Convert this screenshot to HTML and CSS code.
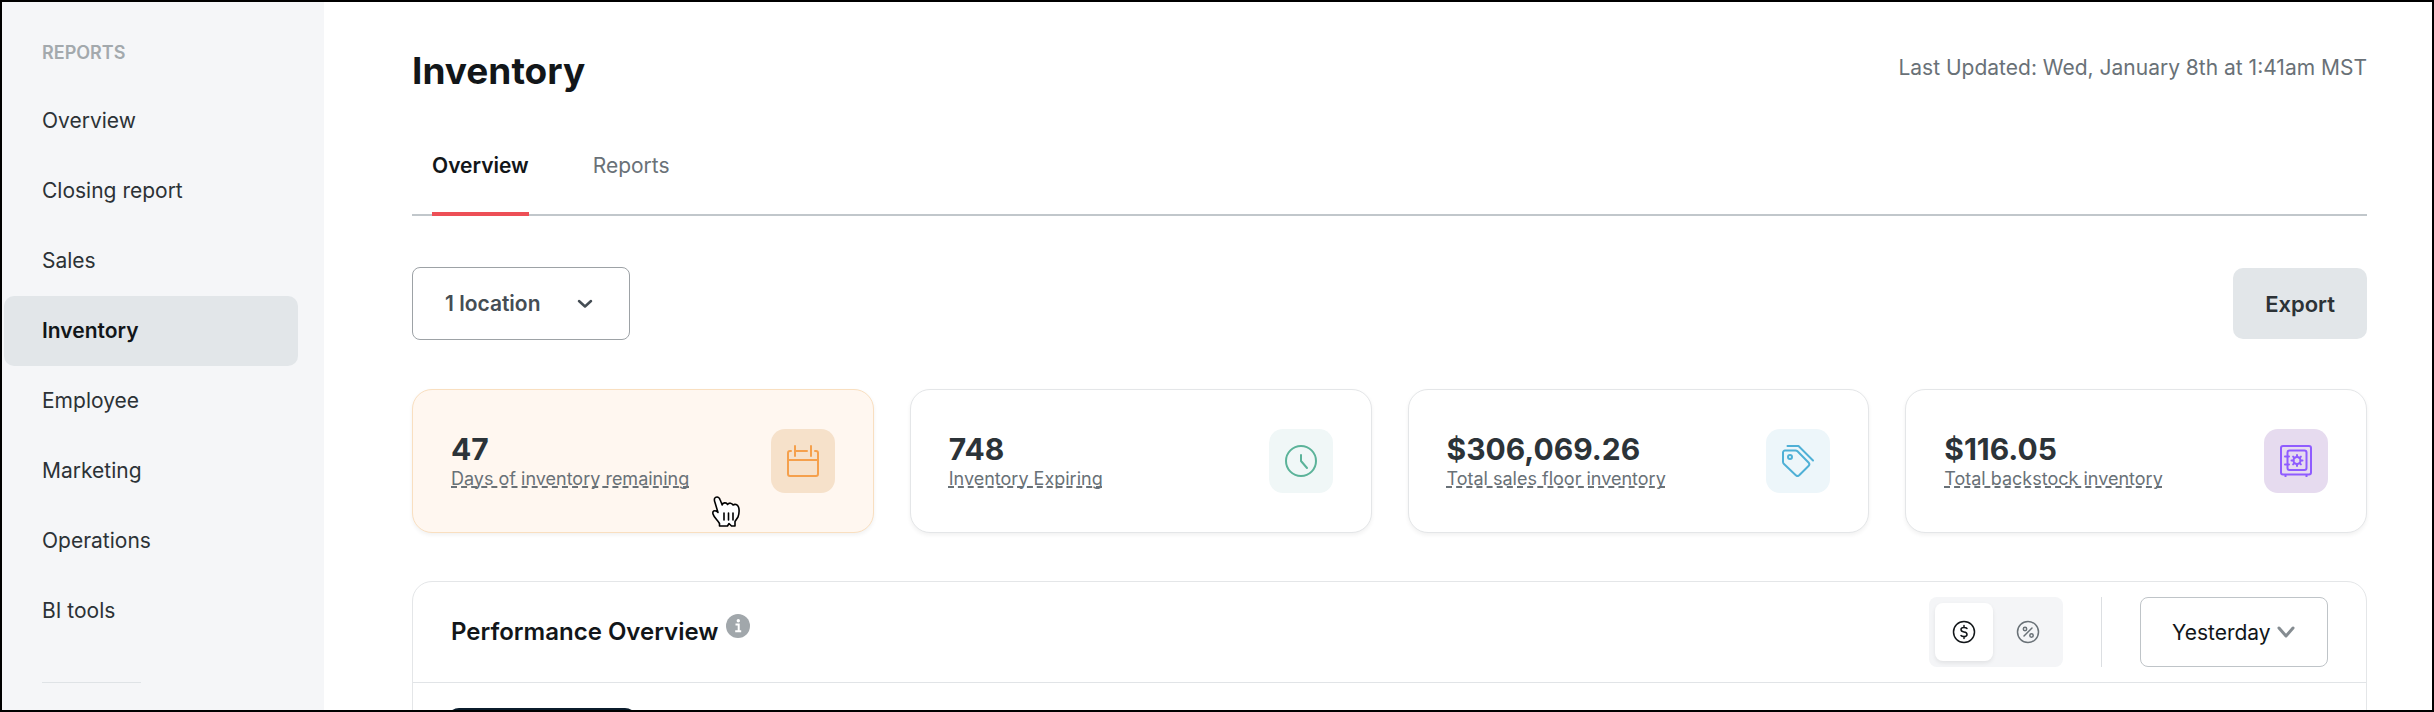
FILE: index.html
```html
<!DOCTYPE html>
<html lang="en">
<head>
  <meta charset="UTF-8">
  <meta name="viewport" content="width=device-width, initial-scale=1.0">
  <title>Inventory</title>
  <link rel="stylesheet" href="styles.css">
</head>
<body>

  <div class="app">
    <!-- Sidebar -->
    <aside class="sidebar">
      <h2 class="sidebar-title">REPORTS</h2>
      <nav class="sidebar-nav">
        <a href="#">Overview</a>
        <a href="#">Closing report</a>
        <a href="#">Sales</a>
        <a href="#" class="active">Inventory</a>
        <a href="#">Employee</a>
        <a href="#">Marketing</a>
        <a href="#">Operations</a>
        <a href="#">BI tools</a>
      </nav>
      <hr class="sidebar-line">
    </aside>

    <main class="main">
      <header class="page-header">
        <h1>Inventory</h1>
        <p class="updated">Last Updated: Wed, January 8th at 1:41am MST</p>
      </header>

      <div class="tabs">
        <button type="button" class="tab active">Overview</button>
        <button type="button" class="tab">Reports</button>
      </div>

      <div class="toolbar">
        <div class="dropdown location">
          <select aria-label="Location">
            <option>1 location</option>
          </select>
          <svg width="16" height="10" viewBox="0 0 16 10" fill="none" stroke="#454d54" stroke-width="2.5" stroke-linecap="round" stroke-linejoin="round"><path d="M2 2l6 5.5L14 2"/></svg>
        </div>
        <button type="button" class="export">Export</button>
      </div>

      <!-- Summary cards -->
      <section class="cards">
        <div class="card highlighted">
          <div>
            <div class="card-value">47</div>
            <div class="card-label">Days of inventory remaining</div>
          </div>
          <div class="card-icon orange">
            <svg width="32" height="32" viewBox="0 0 32 32" fill="none" stroke="#f5a04c" stroke-width="2" stroke-linecap="round" stroke-linejoin="round"><path d="M4 6H3a2 2 0 0 0-2 2v21a2 2 0 0 0 2 2h26a2 2 0 0 0 2-2V8a2 2 0 0 0-2-2h-1M8 6h12M1 15h30M8 1v10M24 1v10"/></svg>
          </div>
          <svg class="cursor" width="28" height="31" viewBox="0 0 28 31" fill="#fff" stroke="#000" stroke-width="1.6" stroke-linecap="round" stroke-linejoin="round"><path d="M3 6.500C1.500 2.500 3 1 5 1c1.500 0 2.500 1 3.200 3l2 5C10.500 6.500 14.500 6 15.500 8.500 17 6.500 20 6.800 21 9c2-1.200 4.500-.5 5.500 2 1 3 .5 7-.5 10l-3 4.500V30h-3.500L17 27.500 15.500 30H7.500v-2.500C5.500 24 2 21.500 1 18c-.8-3 1.500-4 4-2.500l1 1z"/><path d="M12 17v7M16.500 17v7M21 17v7"/></svg>
        </div>

        <div class="card">
          <div>
            <div class="card-value">748</div>
            <div class="card-label">Inventory Expiring</div>
          </div>
          <div class="card-icon green">
            <svg width="32" height="32" viewBox="0 0 32 32" fill="none" stroke="#5bb399" stroke-width="2" stroke-linecap="round" stroke-linejoin="round"><circle cx="16" cy="16" r="15"/><path d="M16 10v6l6 7"/></svg>
          </div>
        </div>

        <div class="card">
          <div>
            <div class="card-value">$306,069.26</div>
            <div class="card-label">Total sales floor inventory</div>
          </div>
          <div class="card-icon blue">
            <svg width="32" height="32" viewBox="0 0 32 32" fill="none" stroke="#4fb0d6" stroke-width="2" stroke-linecap="round" stroke-linejoin="round"><path d="M1 7.500a2 2 0 0 1 2-2h10.500a3 3 0 0 1 2 .8l11 11.200a2.500 2.500 0 0 1 0 3.500l-9.300 9.300a2.500 2.500 0 0 1-3.400 0L2 19a3 3 0 0 1-1-2z"/><circle cx="8" cy="12" r="2"/><path d="M5.500 1h11L31 15.500"/></svg>
          </div>
        </div>

        <div class="card">
          <div>
            <div class="card-value">$116.05</div>
            <div class="card-label">Total backstock inventory</div>
          </div>
          <div class="card-icon purple">
            <svg width="32" height="32" viewBox="0 0 32 32" fill="none" stroke="#8f5cff" stroke-width="2" stroke-linecap="round" stroke-linejoin="round"><rect x="1" y="1" width="30" height="28.500" rx="2"/><rect x="7.500" y="5.500" width="19" height="19.500" rx="2"/><path d="M5 11.500h4M5 19.500h4M5.500 30v1.500M26.500 30v1.500"/><circle cx="17" cy="15.500" r="3.500"/><path d="M17 10v2M17 19v2M11.500 15.500h2M20.500 15.500h2M13.100 11.600l1.400 1.400M19.500 18l1.400 1.400M13.100 19.400l1.400-1.400M19.500 13l1.400-1.400"/></svg>
          </div>
        </div>
      </section>

      <!-- Performance overview -->
      <section class="panel">
        <div class="panel-header">
          <div class="panel-title">
            <h2>Performance Overview</h2>
            <svg width="24" height="24" viewBox="0 0 24 24"><circle cx="12" cy="12" r="12" fill="#a1a7ab"/><circle cx="12.300" cy="6.700" r="1.700" fill="#fff"/><path d="M9.500 10.500h3.200v6.700M9.200 17.200h6" fill="none" stroke="#fff" stroke-width="2"/></svg>
          </div>
          <div class="panel-controls">
            <div class="toggle">
              <label class="toggle-item">
                <input type="radio" name="unit" aria-label="Dollars" checked>
                <svg width="24" height="24" viewBox="0 0 24 24" fill="none" stroke="currentColor" stroke-width="1.5" stroke-linecap="round" stroke-linejoin="round"><circle cx="12" cy="12" r="10.500"/><path d="M12 5.500v2M12 16.500v2M15 8.500c-.5-.7-1.500-1-3-1-4 0-4 4 0 4.500s4 4.500 0 4.500c-1.500 0-2.500-.3-3-1"/></svg>
              </label>
              <label class="toggle-item">
                <input type="radio" name="unit" aria-label="Percent">
                <svg width="24" height="24" viewBox="0 0 24 24" fill="none" stroke="currentColor" stroke-width="1.5" stroke-linecap="round" stroke-linejoin="round"><circle cx="12" cy="12" r="10.500"/><path d="M16 8l-8 8"/><circle cx="9" cy="9" r="1.700"/><circle cx="15.500" cy="15.500" r="1.700"/></svg>
              </label>
            </div>
            <div class="controls-line"></div>
            <div class="dropdown period">
              <select aria-label="Period">
                <option>Yesterday</option>
              </select>
              <svg width="18" height="12" viewBox="0 0 18 12" fill="none" stroke="#858c91" stroke-width="3" stroke-linecap="round" stroke-linejoin="round"><path d="M2 2l7 8 7-8"/></svg>
            </div>
          </div>
        </div>
        <div class="panel-body">
          <div class="panel-block"></div>
        </div>
      </section>
    </main>
  </div>

</body>
</html>
```
FILE: styles.css
```css
* {
  box-sizing: border-box;
}
body {
  margin: 0;
  font-family: Inter, "Liberation Sans", sans-serif;
  font-size: 21px;
  color: #121619;
  background-color: #fff;
}
h1, h2, p {
  margin: 0;
}
button, select {
  font-family: inherit;
  font-size: inherit;
  cursor: pointer;
}
svg {
  display: block;
  flex-shrink: 0;
}
.app {
  display: flex;
  height: 100vh;
  border: 2px solid #000;
  overflow: hidden;
}

/* Sidebar */
.sidebar {
  width: 322px;
  flex-shrink: 0;
  padding: 39px 26px 0 2px;
  background-color: #f5f6f8;
}
.sidebar-title {
  padding-left: 38px;
  font-size: 18px;
  line-height: 24px;
  font-weight: 600;
  color: #a3a9ad;
}
.sidebar-nav {
  display: flex;
  flex-direction: column;
  margin-top: 21px;
}
.sidebar-nav a {
  padding: 0 38px;
  line-height: 70px;
  border-radius: 10px;
  color: #2c3236;
  text-decoration: none;
}
.sidebar-nav .active {
  background-color: #e2e6e9;
  font-weight: 600;
  color: #121619;
}
.sidebar-line {
  width: 99px;
  margin: 36px 38px 0;
  border: 0;
  border-top: 1px solid #dfe3e6;
}

/* Main */
.main {
  flex: 1;
  min-width: 0;
  padding: 45px 65px 0 88px;
}
.page-header {
  display: flex;
  justify-content: space-between;
  align-items: flex-start;
}
h1 {
  font-size: 37px;
  line-height: 48px;
  font-weight: 700;
}
.updated {
  line-height: 42px;
  color: #697177;
}
.tabs {
  display: flex;
  gap: 64px;
  margin-top: 41px;
  padding: 0 20px;
  border-bottom: 2px solid #c1c7cb;
}
.tab {
  margin-bottom: -2px;
  padding: 0 0 16px;
  border: 0;
  border-bottom: 4px solid transparent;
  background: none;
  line-height: 60px;
  color: #697177;
}
.tab.active {
  border-color: #ed4f56;
  font-weight: 600;
  color: #121619;
}
.toolbar {
  display: flex;
  justify-content: space-between;
  align-items: center;
  margin-top: 51px;
}
.dropdown {
  display: grid;
  align-items: center;
}
.dropdown select, .dropdown svg {
  grid-area: 1 / 1;
}
.dropdown svg {
  justify-self: end;
  pointer-events: none;
}
.dropdown select {
  width: 100%;
  appearance: none;
  border-radius: 8px;
  background-color: #fff;
}
.location {
  width: 218px;
}
.location select {
  height: 73px;
  padding: 0 32px;
  border: 1px solid #9da2a6;
  font-weight: 600;
  color: #454d54;
}
.location svg {
  margin-right: 37px;
}
.export {
  height: 71px;
  padding: 0 32px;
  border: 0;
  border-radius: 10px;
  background-color: #e2e6e9;
  font-size: 22px;
  font-weight: 600;
  color: #2c3236;
}

/* Cards */
.cards {
  display: grid;
  grid-template-columns: repeat(4, 1fr);
  gap: 36px;
  margin-top: 49px;
}
.card {
  position: relative;
  display: flex;
  justify-content: space-between;
  align-items: center;
  padding: 39px 38px;
  border: 1px solid #e4e6e8;
  border-radius: 20px;
  background-color: #fff;
  box-shadow: 0 2px 4px rgba(0, 0, 0, 0.06);
}
.card.highlighted {
  border-color: #f9dfc0;
  background-color: #fff7f0;
}
.card-value {
  font-size: 30px;
  line-height: 36px;
  font-weight: 700;
  color: #2c3338;
}
.card-label {
  font-size: 18px;
  line-height: 24px;
  color: #697177;
  text-decoration: underline dashed 2px;
  text-decoration-skip-ink: none;
}
.card-icon {
  display: grid;
  place-items: center;
  width: 64px;
  height: 64px;
  border-radius: 14px;
}
.orange {
  background-color: #f6e1ca;
}
.green {
  background-color: #f0f7f7;
}
.blue {
  background-color: #edf6fa;
}
.purple {
  background-color: #e6dbef;
}
.cursor {
  position: absolute;
  left: 299px;
  top: 106px;
}

/* Performance overview */
.panel {
  margin-top: 48px;
  border: 1px solid #e4e6e8;
  border-radius: 20px;
}
.panel-header {
  display: flex;
  justify-content: space-between;
  align-items: center;
  padding: 15px 38px;
  border-bottom: 1px solid #e1e4e7;
}
.panel-title {
  display: flex;
  align-items: flex-start;
  gap: 8px;
}
.panel-title h2 {
  font-size: 24px;
  line-height: 36px;
  font-weight: 600;
}
.panel-controls {
  display: flex;
  align-items: center;
  gap: 38px;
}
.toggle {
  display: flex;
  gap: 6px;
  padding: 6px;
  border-radius: 8px;
  background-color: #f4f5f7;
}
.toggle-item {
  display: grid;
  place-items: center;
  width: 58px;
  height: 58px;
  border-radius: 8px;
  color: #697177;
  cursor: pointer;
}
.toggle-item input {
  appearance: none;
  margin: 0;
}
.toggle-item input, .toggle-item svg {
  grid-area: 1 / 1;
}
.toggle-item:has(:checked) {
  background-color: #fff;
  color: #121619;
  box-shadow: 0 2px 4px rgba(0, 0, 0, 0.08);
}
.controls-line {
  width: 1px;
  height: 70px;
  background-color: #dcdfe2;
}
.period {
  width: 188px;
}
.period select {
  height: 70px;
  padding: 0 31px;
  border: 1px solid #bfc4c8;
  color: #121619;
}
.period svg {
  margin-right: 33px;
}
.panel-body {
  padding: 25px 34px;
}
.panel-block {
  width: 190px;
  height: 64px;
  border-radius: 12px;
  background-color: #0b1c2c;
}
```
